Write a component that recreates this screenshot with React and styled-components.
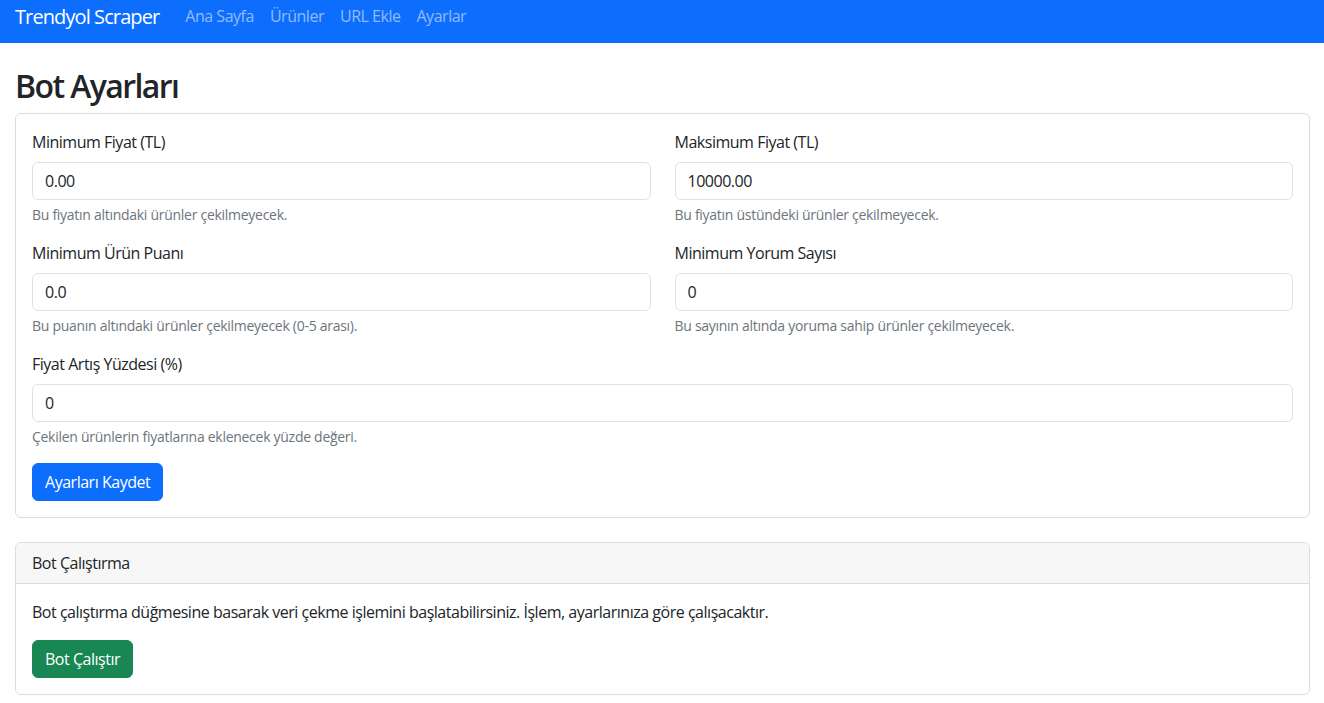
import React from 'react';
import styled, { createGlobalStyle } from 'styled-components';

const GlobalStyle = createGlobalStyle`
    * { box-sizing: border-box; }
    body {
        margin: 0;
        font-family: "Open Sans", "Noto Sans", "Liberation Sans", sans-serif;
        font-size: 16px;
        line-height: 1.5;
        letter-spacing: -0.03em;
        color: #212529;
        background: #fff;
    }
`

const fields = [
    { label: 'Minimum Fiyat (TL)', value: '0.00', help: 'Bu fiyatın altındaki ürünler çekilmeyecek.' },
    { label: 'Maksimum Fiyat (TL)', value: '10000.00', help: 'Bu fiyatın üstündeki ürünler çekilmeyecek.' },
    { label: 'Minimum Ürün Puanı', value: '0.0', help: 'Bu puanın altındaki ürünler çekilmeyecek (0-5 arası).' },
    { label: 'Minimum Yorum Sayısı', value: '0', help: 'Bu sayının altında yoruma sahip ürünler çekilmeyecek.' },
    { label: 'Fiyat Artış Yüzdesi (%)', value: '0', help: 'Çekilen ürünlerin fiyatlarına eklenecek yüzde değeri.', full: true },
];

const App = () =>
{
    return (
        <>
            <GlobalStyle />
            <Navbar>
                <Brand>Trendyol Scraper</Brand>
                <NavLinks>
                    <NavLink>Ana Sayfa</NavLink>
                    <NavLink>Ürünler</NavLink>
                    <NavLink>URL Ekle</NavLink>
                    <NavLink>Ayarlar</NavLink>
                </NavLinks>
            </Navbar>
            <Container>
                <Heading>Bot Ayarları</Heading>
                <Card>
                    <CardBody>
                        <FormGrid>
                            {fields.map(f => (
                                <Field key={f.label} $full={f.full}>
                                    <Label>{f.label}</Label>
                                    <Input defaultValue={f.value} />
                                    <Help>{f.help}</Help>
                                </Field>
                            ))}
                        </FormGrid>
                        <Button $color="#0d6efd">Ayarları Kaydet</Button>
                    </CardBody>
                </Card>
                <Card $spaced>
                    <CardHeader>Bot Çalıştırma</CardHeader>
                    <CardBody>
                        <Text>Bot çalıştırma düğmesine basarak veri çekme işlemini başlatabilirsiniz. İşlem, ayarlarınıza göre çalışacaktır.</Text>
                        <Button $color="#198754">Bot Çalıştır</Button>
                    </CardBody>
                </Card>
            </Container>
        </>
    );
}

const Navbar = styled.nav`
    background-color: #0d6efd;
    height: 43px;
    display: flex;
    align-items: flex-start;
    padding: 3px 15px 0;
`

const Brand = styled.a`
    color: #fff;
    font-size: 20px;
    line-height: 27px;
    letter-spacing: -0.045em;
    margin-right: 18px;
    white-space: nowrap;
`

const NavLinks = styled.div`
    display: flex;
    padding-top: 1px;
`

const NavLink = styled.a`
    color: rgba(255, 255, 255, 0.55);
    padding: 0 8px;
    line-height: 24px;
    white-space: nowrap;
`

const Container = styled.div`
    padding: 24px 14px 0 15px;
`

const Heading = styled.h2`
    margin: 0 0 8px;
    font-size: 32px;
    font-weight: 600;
    line-height: 1.2;
    letter-spacing: -0.05em;
`

const Card = styled.div`
    border: 1px solid #dadcdf;
    border-radius: 6px;
    margin-top: ${p => p.$spaced ? '24px' : '0'};
    overflow: hidden;
`

const CardHeader = styled.div`
    background: #f7f7f7;
    border-bottom: 1px solid #dadcdf;
    padding: 8px 16px;
`

const CardBody = styled.div`
    padding: 16px;
`

const FormGrid = styled.div`
    display: grid;
    grid-template-columns: 1fr 1fr;
    column-gap: 24px;
`

const Field = styled.div`
    grid-column: ${p => p.$full ? '1 / -1' : 'auto'};
    margin-bottom: 16px;
`

const Label = styled.label`
    display: block;
    margin-bottom: 8px;
`

const Input = styled.input`
    display: block;
    width: 100%;
    height: 38px;
    padding: 6px 12px;
    font: inherit;
    letter-spacing: inherit;
    color: #212529;
    border: 1px solid #dee2e6;
    border-radius: 6px;
    outline: none;
`

const Help = styled.div`
    margin-top: 4px;
    font-size: 14px;
    line-height: 21px;
    letter-spacing: -0.02em;
    color: #6c757d;
`

const Text = styled.p`
    margin: 0 0 16px;
`

const Button = styled.button`
    display: inline-block;
    height: 38px;
    padding: 6px 12px;
    font: inherit;
    letter-spacing: inherit;
    color: #fff;
    background-color: ${p => p.$color};
    border: 1px solid ${p => p.$color};
    border-radius: 6px;
    cursor: pointer;
`

export default App;
